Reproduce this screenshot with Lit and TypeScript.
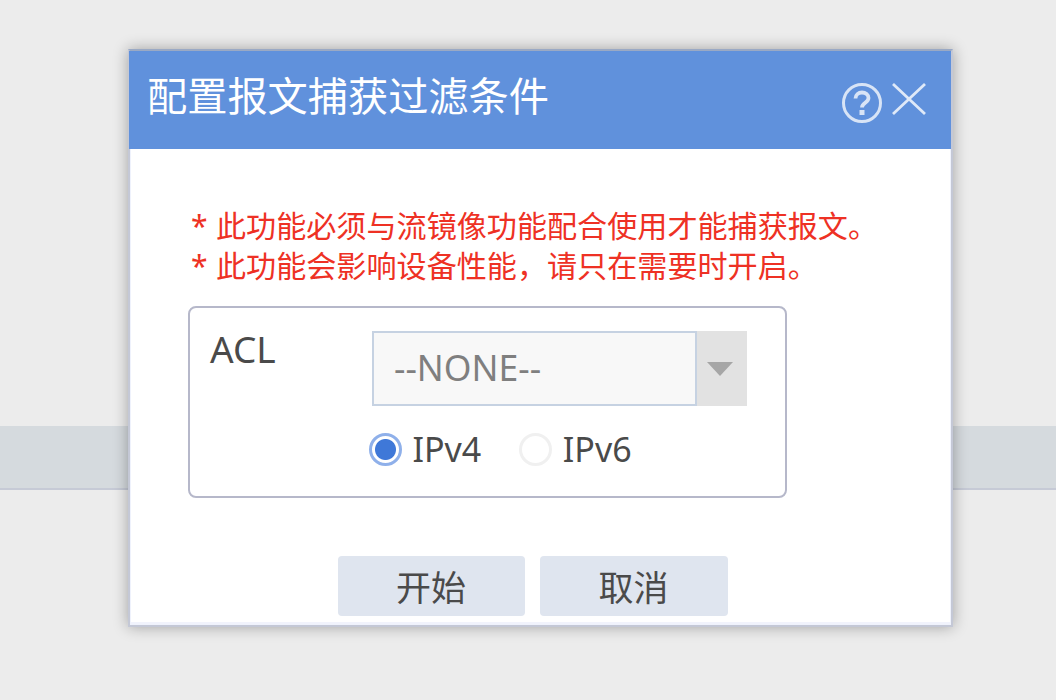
import { LitElement, html, css } from 'lit';
import { customElement } from 'lit/decorators.js';

@customElement('app-root')
export class AppRoot extends LitElement {
  static styles = css`
    :host {
      display: block;
      position: relative;
      height: 700px;
      overflow: hidden;
      background: #ececec;
      font-family: "Noto Sans", "Noto Sans CJK SC", sans-serif;
    }
    .band {
      position: relative;
      top: 426px;
      height: 62px;
      background: #d5dade;
      border-bottom: 2px solid #c6cad6;
    }
    .dialog {
      position: absolute;
      left: 128px;
      top: 49px;
      width: 825px;
      height: 578px;
      box-sizing: border-box;
      background: #fff;
      border: 2px solid #c4c8d6;
      border-top-color: #9aa9c4;
      box-shadow: 0 0 14px rgba(0, 0, 0, 0.32), inset 0 0 0 1px #eff2fc, inset 0 -3px 0 #f1f3fc;
      display: flex;
      flex-direction: column;
    }
    .head {
      height: 98px;
      margin: 0 0 0 -1px;
      padding: 0 25px 0 18px;
      background: #6091dc;
      display: flex;
      justify-content: space-between;
      color: #fff;
      flex: none;
    }
    .title {
      font-size: 40.2px;
      line-height: 90px;
    }
    .tools {
      display: flex;
      align-items: flex-start;
      gap: 9px;
      padding-top: 31px;
    }
    .tools svg {
      display: block;
    }
    .body {
      flex: 1;
      padding: 57px 0 0 58px;
    }
    .note {
      margin: 0 0 0 3px;
      color: #ee3124;
      font-size: 30.1px;
      line-height: 40px;
      white-space: nowrap;
    }
    .star {
      display: inline-block;
      width: 25px;
    }
    .box {
      box-sizing: border-box;
      width: 599px;
      height: 192px;
      margin-top: 20px;
      border: 2px solid #b6b8ca;
      border-radius: 8px;
      padding: 23px 0 0 20px;
      display: grid;
      grid-template-columns: 162px auto;
      grid-template-rows: 75px auto;
      justify-content: start;
    }
    .label {
      font-size: 37px;
      line-height: 36px;
      color: #4a4a4a;
    }
    .select {
      display: flex;
      height: 75px;
    }
    .value {
      box-sizing: border-box;
      width: 325px;
      height: 75px;
      padding-left: 20px;
      background: #f8f8f8;
      border: 2px solid #c6d2e2;
      color: #7f7f7f;
      font-size: 35.5px;
      line-height: 68px;
    }
    .arrow {
      width: 50px;
      padding-right: 4px;
      box-sizing: border-box;
      background: #e2e2e2;
      display: flex;
      align-items: center;
      justify-content: center;
    }
    .radios {
      grid-column: 2;
      display: flex;
      margin: 20px 0 0 -3px;
      height: 46px;
      align-items: center;
    }
    .radio {
      display: flex;
      align-items: center;
      gap: 10.5px;
      font-size: 34px;
      color: #4a4a4a;
      line-height: 46px;
      margin-right: 38px;
    }
    .dot {
      box-sizing: border-box;
      width: 33px;
      height: 33px;
      border-radius: 50%;
      border: 3px solid #f0f0f0;
      background: #fff;
    }
    .dot.on {
      border-color: #8fb0ea;
      background: radial-gradient(circle, #3f78d8 0 10px, #fff 11px);
    }
    .actions {
      display: flex;
      gap: 15px;
      justify-content: center;
      margin: 58px 0 0 -58px;
      padding-right: 16px;
    }
    button {
      all: unset;
      box-sizing: border-box;
      height: 60px;
      border-radius: 4px;
      background: #dfe5ef;
      color: #4a4a4a;
      font-size: 35px;
      line-height: 63px;
      text-align: center;
    }
    .start {
      width: 187px;
    }
    .cancel {
      width: 188px;
    }
  `;

  render() {
    return html`
      <div class="band"></div>
      <div class="dialog">
        <div class="head">
          <div class="title">配置报文捕获过滤条件</div>
          <div class="tools">
            <svg width="42" height="42" viewBox="0 0 42 42" fill="none" stroke="#d8e4f6">
              <circle cx="21" cy="21" r="18.5" stroke-width="3" />
              <path d="M14.5 16.5c0-3.8 3-6 6.5-6s6.5 2.2 6.5 5.6c0 4.6-6.5 4.8-6.5 9.4" stroke-width="3.8" />
              <rect x="18.5" y="28" width="5" height="5" fill="#d8e4f6" stroke="none" />
            </svg>
            <svg width="34" height="34" viewBox="0 0 34 34" fill="none" stroke="#dfe9f8" stroke-width="2.8">
              <path d="M1 2l32 30M33 2L1 32" />
            </svg>
          </div>
        </div>
        <div class="body">
          <p class="note"><span class="star">*</span>此功能必须与流镜像功能配合使用才能捕获报文。</p>
          <p class="note"><span class="star">*</span>此功能会影响设备性能，请只在需要时开启。</p>
          <div class="box">
            <div class="label">ACL</div>
            <div class="select">
              <div class="value">--NONE--</div>
              <div class="arrow">
                <svg width="26" height="14" viewBox="0 0 26 14"><path d="M0 0h26L13 14z" fill="#a6a6a6" /></svg>
              </div>
            </div>
            <div class="radios">
              <label class="radio"><span class="dot on"></span>IPv4</label>
              <label class="radio"><span class="dot"></span>IPv6</label>
            </div>
          </div>
          <div class="actions">
            <button class="start">开始</button>
            <button class="cancel">取消</button>
          </div>
        </div>
      </div>
    `;
  }
}
